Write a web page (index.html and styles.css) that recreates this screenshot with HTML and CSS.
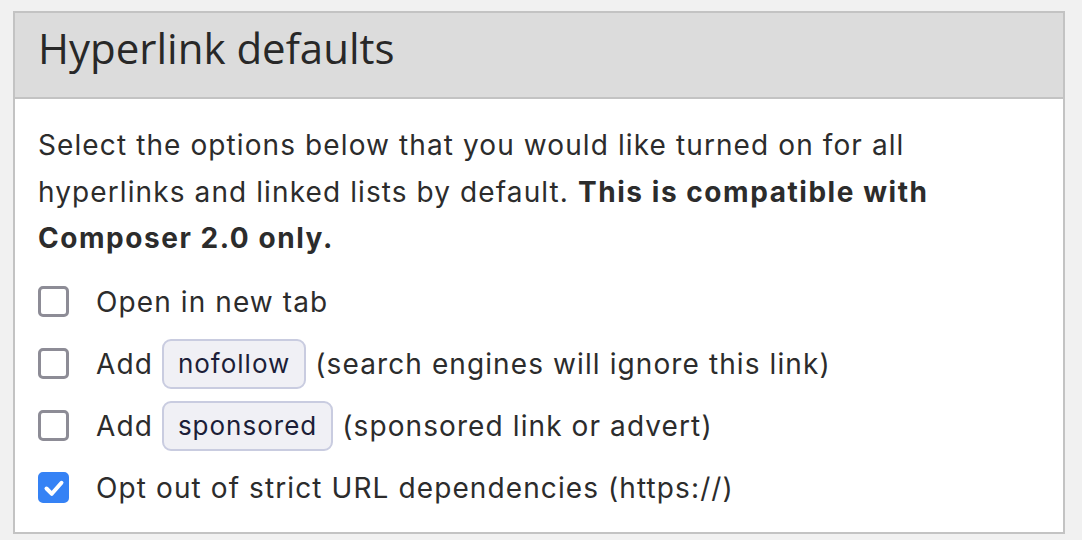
FILE: index.html
```html
<!DOCTYPE html>
<html>
<head>
<meta charset="utf-8">
<link rel="stylesheet" href="styles.css">
</head>
<body>
<div class="panel">
  <div class="panel-head"><h2 class="title">Hyperlink defaults</h2></div>
  <div class="panel-body">
    <p class="intro">Select the options below that you would like turned on for all hyperlinks and linked lists by default. <strong>This is compatible with Composer 2.0 only.</strong></p>
    <div class="options">
      <label class="opt"><span class="box"></span><span class="lbl">Open in new tab</span></label>
      <label class="opt"><span class="box"></span><span class="lbl">Add <code class="tag">nofollow</code> (search engines will ignore this link)</span></label>
      <label class="opt"><span class="box"></span><span class="lbl">Add <code class="tag">sponsored</code> (sponsored link or advert)</span></label>
      <label class="opt"><span class="box checked"><svg viewBox="0 0 30 30" width="30" height="30"><path d="M7.5 15.5 L12.8 20.8 L22.5 9.8" fill="none" stroke="#fff" stroke-width="4" stroke-linecap="round" stroke-linejoin="round"/></svg></span><span class="lbl">Opt out of strict URL dependencies (https://)</span></label>
    </div>
  </div>
</div>
</body>
</html>
```

FILE: styles.css
```css
html, body {
  margin: 0;
  padding: 0;
}
body {
  background: #f1f1f1;
  padding: 11px 17px 8px 13px;
  font-family: Inter, "Noto Sans", sans-serif;
  color: #2c2c2c;
}
.panel {
  border: 2px solid #c3c3c3;
  background: #fff;
}
.panel-head {
  background: #dcdcdc;
  border-bottom: 2px solid #c3c3c3;
  height: 84px;
  display: flex;
  align-items: center;
  padding: 0 23px;
}
.title {
  margin: 0;
  font-family: "Open Sans", sans-serif;
  font-weight: 400;
  font-size: 42px;
  color: #282828;
  position: relative;
  top: -8px;
}
.panel-body {
  padding: 23px 23px 13px 23px;
}
.intro {
  margin: 0 0 9px 0;
  font-size: 28px;
  letter-spacing: 1.1px;
  line-height: 46.5px;
}
.intro strong {
  font-weight: 700;
  letter-spacing: 1.55px;
}
.options {
  display: flex;
  flex-direction: column;
}
.opt {
  display: flex;
  align-items: center;
  height: 62px;
  font-size: 28px;
  letter-spacing: 1.1px;
}
.box {
  box-sizing: border-box;
  width: 31px;
  height: 31px;
  border: 3px solid #8d8c96;
  border-radius: 5px;
  flex: none;
  margin-right: 27px;
  display: flex;
  align-items: center;
  justify-content: center;
}
.box.checked {
  background: #3582f5;
  border-color: #3582f5;
}
.box.checked svg {
  flex: none;
}
.lbl {
  display: flex;
  align-items: center;
  white-space: pre;
}
.tag {
  font-family: Inter, "Noto Sans", sans-serif;
  font-size: 26px;
  letter-spacing: 1px;
  color: #1c1e38;
  background: #f0f0f5;
  border: 2px solid #c9cce0;
  border-radius: 9px;
  height: 50px;
  box-sizing: border-box;
  padding: 0 14px;
  display: inline-flex;
  align-items: center;
  margin: 0;
}
```
